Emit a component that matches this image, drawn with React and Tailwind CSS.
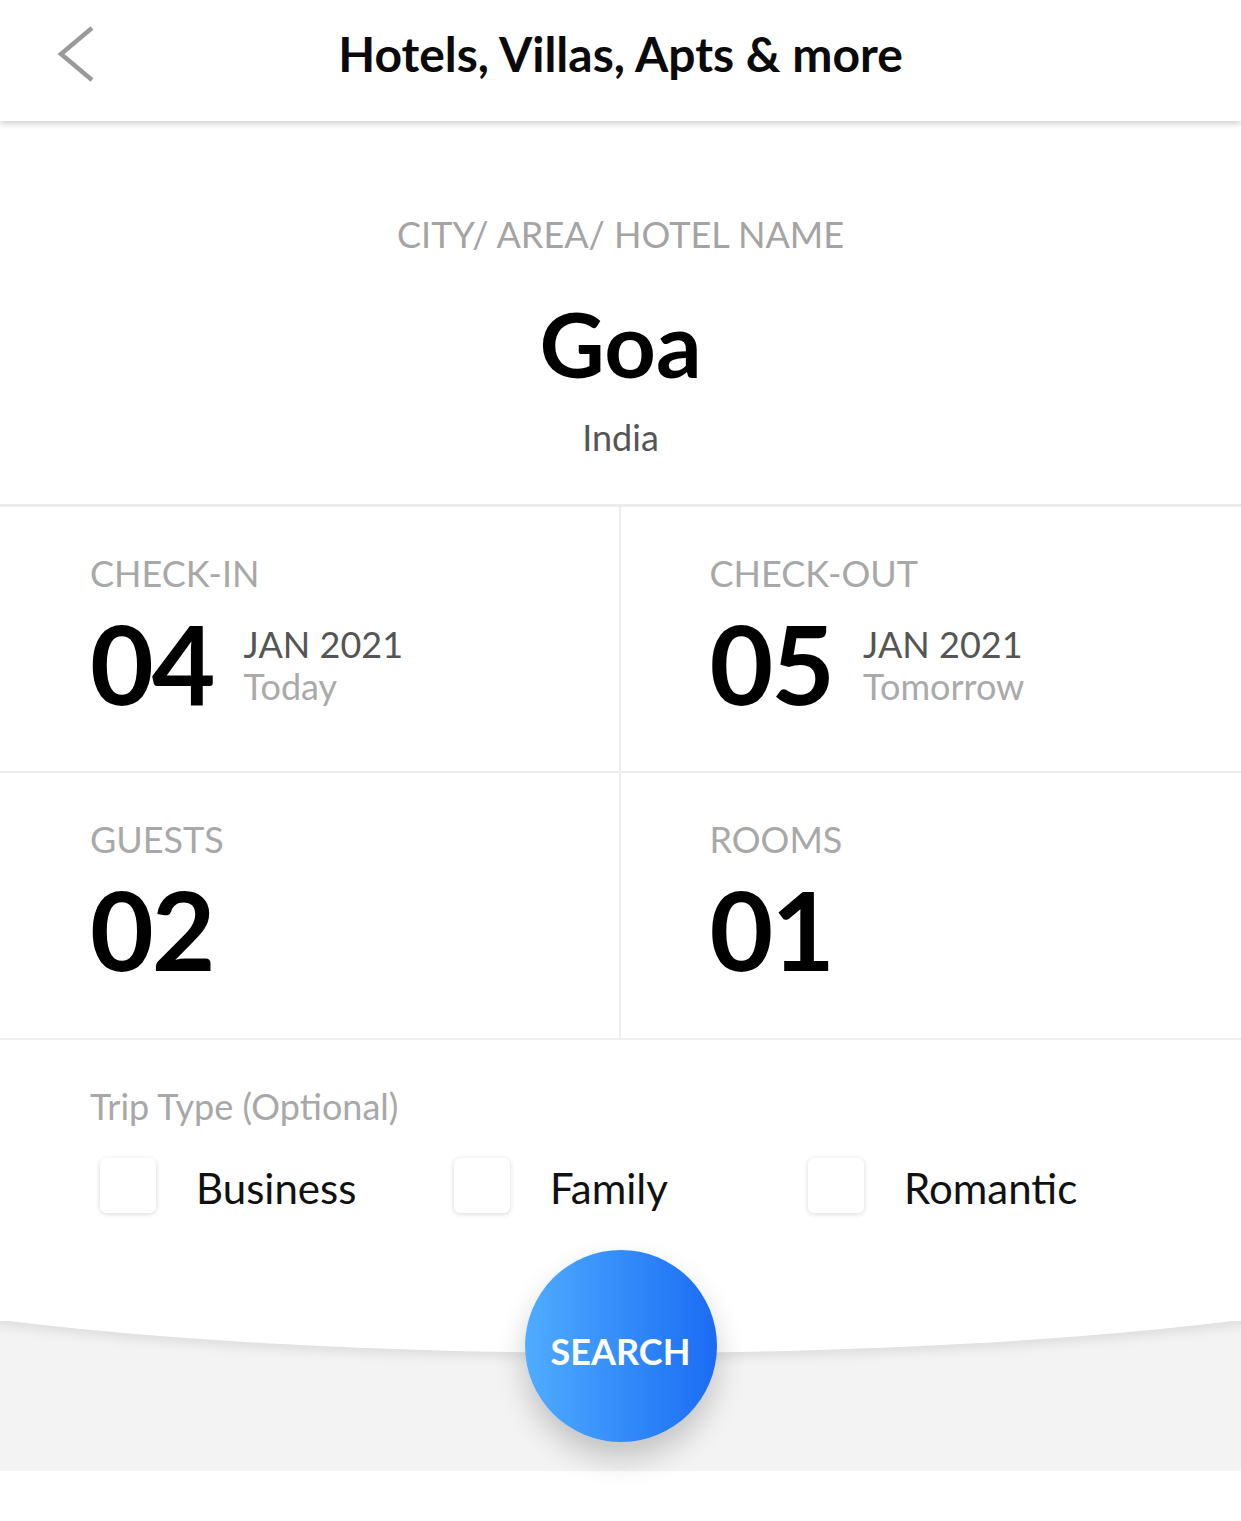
export default function App() {
  const trips = ['Business', 'Family', 'Romantic']

  return (
    <div className="min-h-[1521px] bg-white font-['Lato',sans-serif] text-black">

      {/* top bar */}
      <header className="relative z-10 grid h-[121px] grid-cols-[1fr_auto_1fr] bg-white shadow-[0_3px_6px_rgba(0,0,0,0.18)]">
        <div className="pl-[56px] pt-[24px]">
          <svg width="40" height="60" viewBox="0 0 40 60" fill="none">
            <polyline points="36,4 5,30 36,56" stroke="#9a9a9a" strokeWidth="4.5" />
          </svg>
        </div>
        <h1 className="pt-[30px] text-[48px] leading-none font-bold text-[#0a0a0a]">
          Hotels, Villas, Apts &amp; more
        </h1>
        <div />
      </header>

      {/* destination */}
      <section className="flex flex-col items-center border-b-[3px] border-[#ececec] pt-[95px] pb-[49px]">
        <p className="text-[36px] leading-none text-[#a4a4a4]">CITY/ AREA/ HOTEL NAME</p>
        <p className="mt-[46px] text-[90px] leading-none font-bold">Goa</p>
        <p className="mt-[31px] text-[36px] leading-none text-[#555]">India</p>
      </section>

      {/* dates */}
      <div className="grid grid-cols-2 border-b-2 border-[#eeeeee]">
        <DateCell label="CHECK-IN" day="04" month="JAN 2021" note="Today" border />
        <DateCell label="CHECK-OUT" day="05" month="JAN 2021" note="Tomorrow" />
      </div>

      {/* guests / rooms */}
      <div className="grid grid-cols-2 border-b-2 border-[#eeeeee]">
        <CountCell label="GUESTS" value="02" border />
        <CountCell label="ROOMS" value="01" />
      </div>

      {/* trip type */}
      <section className="pt-[48px] pb-[108px]">
        <p className="pl-[90px] text-[36px] leading-none text-[#a8a8a8]">Trip Type (Optional)</p>
        <div className="mt-[34px] flex pl-[100px]">
          {trips.map(t => (
            <label key={t} className="flex w-[354px] items-center gap-[40px]">
              <span className="h-[55px] w-[56px] rounded-[6px] bg-white shadow-[0_1px_5px_rgba(0,0,0,0.16)]" />
              <span className="pt-[4px] text-[42px] leading-none text-[#111]">{t}</span>
            </label>
          ))}
        </div>
      </section>

      {/* bottom band with search */}
      <div className="relative">
        <div className="relative h-[150px] overflow-hidden bg-[#f3f3f3]">
          <div className="absolute bottom-[118px] left-1/2 h-[240px] w-[1800px] -translate-x-1/2 rounded-[50%] bg-white shadow-[0_5px_12px_rgba(0,0,0,0.09)]" />
        </div>
        <button className="absolute top-[-71px] left-1/2 flex h-[192px] w-[192px] -translate-x-1/2 items-center justify-center rounded-full bg-linear-to-r from-[#50acff] to-[#1b6bf3] pt-[10px] text-[36px] leading-none font-bold text-white shadow-[0_16px_30px_rgba(0,0,0,0.2)]">
          SEARCH
        </button>
      </div>
    </div>
  )
}

function DateCell({ label, day, month, note, border }) {
  return (
    <div className={`h-[264px] pt-[48px] ${border ? 'border-r-2 border-[#eeeeee] pl-[90px]' : 'pl-[89px]'}`}>
      <p className="text-[36px] leading-none text-[#a8a8a8]">{label}</p>
      <div className="mt-[16px] flex items-start">
        <span className="text-[110px] leading-none font-bold tracking-[-2px]">{day}</span>
        <div className="mt-[16px] ml-[30px] text-[36px] leading-[42px]">
          <p className="text-[#555]">{month}</p>
          <p className="text-[#aaa]">{note}</p>
        </div>
      </div>
    </div>
  )
}

function CountCell({ label, value, border }) {
  return (
    <div className={`h-[265px] pt-[48px] ${border ? 'border-r-2 border-[#eeeeee] pl-[90px]' : 'pl-[89px]'}`}>
      <p className="text-[36px] leading-none text-[#a8a8a8]">{label}</p>
      <p className="mt-[16px] text-[110px] leading-none font-bold tracking-[-2px]">{value}</p>
    </div>
  )
}
